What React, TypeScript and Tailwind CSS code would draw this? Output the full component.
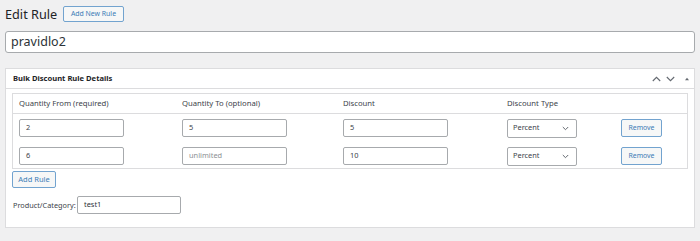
import React from "react";

const font = { fontFamily: '"Noto Sans", "Open Sans", Arial, sans-serif' };

function Input({ value, placeholder, w }: { value?: string; placeholder?: string; w: string }) {
  return (
    <div
      className={`${w} h-[18px] flex items-center pl-[6px] border border-[#a7aaad] rounded-[2px] bg-white text-[7.4px] whitespace-nowrap ${
        value ? "text-[#3c434a]" : "text-[#8c8f94]"
      }`}
    >
      {value ?? placeholder}
    </div>
  );
}

function Select() {
  return (
    <div className="w-[70px] h-[19px] flex items-center justify-between pl-[5px] pr-[7px] border border-[#a7aaad] rounded-[2px] bg-white text-[7.4px] text-[#3c434a]">
      <span>Percent</span>
      <svg width="7" height="5" viewBox="0 0 7 5">
        <path d="M0.8 1 L3.5 3.7 L6.2 1" fill="none" stroke="#646970" strokeWidth="1" />
      </svg>
    </div>
  );
}

function BlueButton({ children, w }: { children: React.ReactNode; w: string }) {
  return (
    <div
      className={`${w} flex items-center justify-center border border-[#72a3cf] rounded-[2px] bg-[#f6f7f7] text-[#3b7cb6] whitespace-nowrap shrink-0`}
    >
      {children}
    </div>
  );
}

function Row({ from, to, disc }: { from: string; to?: string; disc: string }) {
  return (
    <div className="flex items-center h-[18px]">
      <div className="w-[169px] pl-[6px]">
        <Input value={from} w="w-[105px]" />
      </div>
      <div className="w-[161px]">
        {to ? <Input value={to} w="w-[105px]" /> : <Input placeholder="unlimited" w="w-[105px]" />}
      </div>
      <div className="w-[164px]">
        <Input value={disc} w="w-[105px]" />
      </div>
      <div className="w-[114px]">
        <Select />
      </div>
      <div>
        <BlueButton w="w-[41px] h-[18px]">
          <span className="text-[6.9px]">Remove</span>
        </BlueButton>
      </div>
    </div>
  );
}

export default function App() {
  return (
    <div className="w-[700px] h-[241px] bg-[#f0f0f1] overflow-hidden px-[5px]" style={font}>
      <div className="flex items-center h-[16px] mt-[6px]">
        <div className="text-[12.7px] text-[#1d2327] leading-none w-[58px] whitespace-nowrap shrink-0">Edit Rule</div>
        <BlueButton w="w-[61px] h-[16px]">
          <span className="text-[6.9px]">Add New Rule</span>
        </BlueButton>
      </div>
      <div className="mt-[9px] h-[22px] border border-[#a7aaad] rounded-[3px] bg-white flex items-center pl-[5px] text-[12.5px] text-[#2c3338]">
        pravidlo2
      </div>
      <div className="mt-[15px] h-[160px] border border-[#dcdcde] bg-white">
        <div className="h-[20px] border-b border-[#dcdcde] flex items-center justify-between pl-[7px] pr-[4px]">
          <span className="text-[7.6px] font-bold text-[#1d2327]">Bulk Discount Rule Details</span>
          <div className="flex items-center gap-[5px]">
            <svg width="9" height="6" viewBox="0 0 9 6">
              <path d="M0.8 5 L4.5 1.3 L8.2 5" fill="none" stroke="#646970" strokeWidth="1.1" />
            </svg>
            <svg width="9" height="6" viewBox="0 0 9 6">
              <path d="M0.8 1 L4.5 4.7 L8.2 1" fill="none" stroke="#646970" strokeWidth="1.1" />
            </svg>
            <svg width="6" height="6" viewBox="0 0 6 6" className="ml-[4px]">
              <path d="M1 4.3 L3 1.8 L5 4.3 Z" fill="#646970" />
            </svg>
          </div>
        </div>
        <div className="pl-[6px] pr-[6px] pt-[4px]">
          <div className="border border-[#dcdcde]">
            <div className="flex items-center h-[20px] border-b border-[#dcdcde] text-[7.7px] text-[#3c434a]">
              <div className="w-[169px] pl-[6px]">Quantity From (required)</div>
              <div className="w-[161px]">Quantity To (optional)</div>
              <div className="w-[164px]">Discount</div>
              <div className="w-[114px]">Discount Type</div>
            </div>
            <div className="pt-[5px] pb-[3px] flex flex-col gap-[10px]">
              <Row from="2" to="5" disc="5" />
              <Row from="6" disc="10" />
            </div>
          </div>
          <div className="mt-[2px] flex">
            <BlueButton w="w-[44px] h-[17px]">
              <span className="text-[7.5px]">Add Rule</span>
            </BlueButton>
          </div>
          <div className="mt-[8px] flex items-center">
            <span className="text-[7.3px] text-[#3c434a] w-[65px] pl-[1px] whitespace-nowrap shrink-0">Product/Category:</span>
            <div className="w-[104px] h-[18px] flex items-center pl-[6px] border border-[#a7aaad] rounded-[2px] bg-white text-[7.4px] text-[#2c3338]">
              test1
            </div>
          </div>
        </div>
      </div>
    </div>
  );
}
